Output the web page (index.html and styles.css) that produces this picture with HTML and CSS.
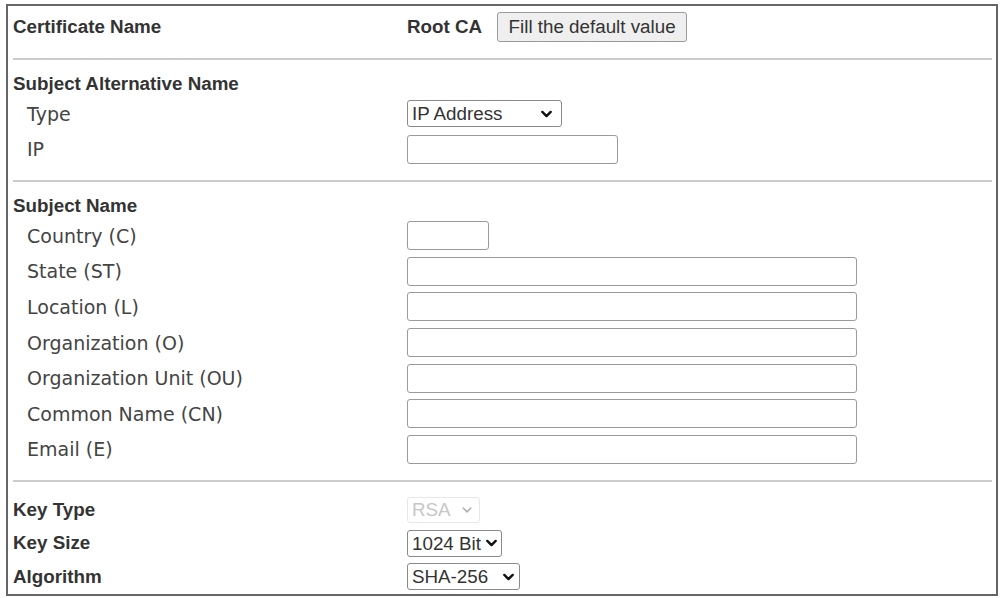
FILE: index.html
```
<!DOCTYPE html>
<html>
<head>
<meta charset="utf-8">
<link rel="stylesheet" href="styles.css">
</head>
<body>
<div class="panel">
  <div class="row first">
    <span class="label bold">Certificate Name</span>
    <div class="value">
      <span class="bold">Root CA</span>
      <button class="btn" type="button">Fill the default value</button>
    </div>
  </div>
  <div class="rule"></div>

  <div class="head bold">Subject Alternative Name</div>
  <div class="row sub">
    <span class="label ind">Type</span>
    <div class="value">
      <span class="sel w-ip">
        <select class="select"><option>IP Address</option></select>
        <svg class="chev" viewBox="0 0 10 7" width="11" height="8"><path d="M1.2 1.2 L5 5 L8.8 1.2"/></svg>
      </span>
    </div>
  </div>
  <div class="row sub">
    <span class="label ind">IP</span>
    <div class="value"><input class="field w-211" type="text"></div>
  </div>
  <div class="rule r2"></div>

  <div class="head bold">Subject Name</div>
  <div class="row sn">
    <span class="label ind">Country (C)</span>
    <div class="value"><input class="field w-82" type="text"></div>
  </div>
  <div class="row sn">
    <span class="label ind">State (ST)</span>
    <div class="value"><input class="field w-450" type="text"></div>
  </div>
  <div class="row sn">
    <span class="label ind">Location (L)</span>
    <div class="value"><input class="field w-450" type="text"></div>
  </div>
  <div class="row sn">
    <span class="label ind">Organization (O)</span>
    <div class="value"><input class="field w-450" type="text"></div>
  </div>
  <div class="row sn">
    <span class="label ind">Organization Unit (OU)</span>
    <div class="value"><input class="field w-450" type="text"></div>
  </div>
  <div class="row sn">
    <span class="label ind">Common Name (CN)</span>
    <div class="value"><input class="field w-450" type="text"></div>
  </div>
  <div class="row sn">
    <span class="label ind">Email (E)</span>
    <div class="value"><input class="field w-450" type="text"></div>
  </div>
  <div class="rule r3"></div>

  <div class="row key k1">
    <span class="label bold">Key Type</span>
    <div class="value">
      <span class="sel w-rsa">
        <select class="select" disabled><option>RSA</option></select>
        <svg class="chev" viewBox="0 0 10 7" width="10" height="7"><path d="M1.2 1.2 L5 5 L8.8 1.2"/></svg>
      </span>
    </div>
  </div>
  <div class="row key k2">
    <span class="label bold">Key Size</span>
    <div class="value">
      <span class="sel w-bit">
        <select class="select"><option>1024 Bit</option></select>
        <svg class="chev" viewBox="0 0 10 7" width="11" height="8"><path d="M1.2 1.2 L5 5 L8.8 1.2"/></svg>
      </span>
    </div>
  </div>
  <div class="row key k3">
    <span class="label bold">Algorithm</span>
    <div class="value">
      <span class="sel w-sha">
        <select class="select"><option>SHA-256</option></select>
        <svg class="chev" viewBox="0 0 10 7" width="11" height="8"><path d="M1.2 1.2 L5 5 L8.8 1.2"/></svg>
      </span>
    </div>
  </div>
</div>
</body>
</html>
```
FILE: styles.css
```
html, body {
  margin: 0;
  padding: 0;
  background: #ffffff;
}

body {
  font-family: "Liberation Sans", Arial, sans-serif;
  color: #333333;
}

.panel {
  box-sizing: border-box;
  margin: 4px 0 0 6px;
  width: 992px;
  height: 592px;
  border: 2px solid #666666;
  padding: 3px 4px 0 5px;
  background: #ffffff;
}

.bold {
  font-family: "Liberation Sans", Arial, sans-serif;
  font-weight: bold;
  font-size: 18.8px;
  color: #333333;
}

.row {
  display: grid;
  grid-template-columns: 394px 1fr;
  align-items: center;
}

.row.first { height: 36px; }
.row.sub { height: 35.5px; }
.row.sn { height: 35.6px; }
.row.k1 { height: 34px; margin-top: 11px; }
.row.k2 { height: 33px; }
.row.k3 { height: 34px; }

.label.ind {
  padding-left: 14px;
  font-family: "DejaVu Sans", Verdana, sans-serif;
  font-size: 19px;
  color: #444444;
}

.value {
  display: flex;
  align-items: center;
  gap: 15px;
}

.head {
  height: 24px;
  line-height: 24px;
  margin-top: 12px;
}

.rule {
  height: 2px;
  background: #cccccc;
  margin: 13px 0 0 0;
  width: 979px;
}
.rule.r2 { margin-top: 13px; }
.rule.r3 { margin-top: 12.8px; }

.btn {
  box-sizing: border-box;
  height: 30px;
  width: 190px;
  padding: 0;
  border: 1px solid #9a9a9a;
  border-radius: 3px;
  background: #efefef;
  font-family: "Liberation Sans", Arial, sans-serif;
  font-size: 18.8px;
  color: #333333;
}

.field {
  box-sizing: border-box;
  height: 29px;
  border: 1px solid #9a9a9a;
  border-radius: 3px;
  background: #ffffff;
  margin: 0;
  padding: 0 4px;
}
.w-82 { width: 82px; }
.w-211 { width: 211px; }
.w-450 { width: 450px; }

.sel {
  position: relative;
  display: inline-block;
}

.select {
  -webkit-appearance: none;
  appearance: none;
  box-sizing: border-box;
  width: 100%;
  height: 27px;
  margin: 0;
  padding: 0 0 0 4px;
  border: 1px solid #8a8a8a;
  border-radius: 3px;
  background: #ffffff;
  font-family: "Liberation Sans", Arial, sans-serif;
  font-size: 18.8px;
  color: #333333;
  display: block;
}

.chev {
  position: absolute;
  top: 50%;
  transform: translateY(-45%);
  right: 7px;
  fill: none;
  stroke: #111111;
  stroke-width: 2.2;
  stroke-linecap: round;
  stroke-linejoin: round;
}

.w-ip { width: 155px; }
.w-ip .chev { right: 10px; }
.w-rsa { width: 73px; }
.w-rsa .select { height: 26px; border-color: #dddddd; color: #b0b0b0; background: #ffffff; }
.w-rsa .chev { stroke: #b0b0b0; stroke-width: 1.6; right: 8px; }
.w-bit { width: 95px; }
.w-bit .chev { right: 5px; }
.w-sha { width: 113px; }
.w-sha .chev { right: 6px; }
```
